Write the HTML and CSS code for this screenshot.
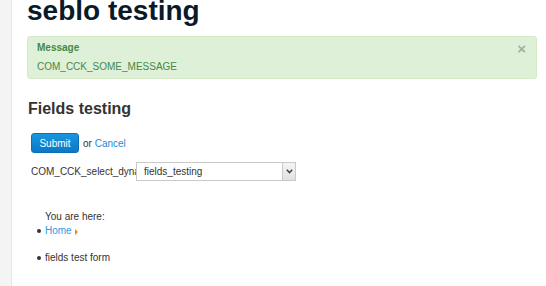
FILE: index.html
```html
<!DOCTYPE html>
<html lang="en">
<head>
    <meta charset="UTF-8">
    <meta name="viewport" content="width=device-width, initial-scale=1.0">
    <title>seblo testing</title>
    <link rel="stylesheet" href="styles.css">
</head>
<body>
    <div class="page">
        <div class="side-strip"></div>
        <div class="content">
            <h1 class="page-title">seblo testing</h1>

            <div class="alert">
                <span class="alert-close">&times;</span>
                <h4 class="alert-heading">Message</h4>
                <p class="alert-text">COM_CCK_SOME_MESSAGE</p>
            </div>

            <h2 class="form-title">Fields testing</h2>

            <form class="cck-form" onsubmit="return false;">
                <div class="form-actions">
                    <button type="submit" class="btn-primary">Submit</button>
                    <span class="or-text">or <a href="#" class="link">Cancel</a></span>
                </div>
                <div class="field-row">
                    <label class="field-label" for="dyn">COM_CCK_select_dynamic</label>
                    <div class="select-box" id="dyn">
                        <span class="select-value">fields_testing</span>
                        <span class="select-arrow">
                            <svg width="7" height="5" viewBox="0 0 7 5"><path d="M0.8 0.8 L3.5 3.6 L6.2 0.8" fill="none" stroke="#444" stroke-width="1.5"/></svg>
                        </span>
                    </div>
                </div>
            </form>

            <div class="breadcrumbs">
                <span class="here">You are here:</span>
                <ul class="crumbs">
                    <li><a href="#" class="link crumb-link">Home</a><span class="divider"></span></li>
                    <li>fields test form</li>
                </ul>
            </div>
        </div>
    </div>
</body>
</html>
```

FILE: styles.css
```css
body {
    margin: 0;
    font-family: "Liberation Sans", Arial, sans-serif;
    font-size: 10px;
    color: #333;
    background: #fff;
    overflow: hidden;
}
.page {
    display: flex;
    min-height: 286px;
}
.side-strip {
    width: 11px;
    background: #f4f4f4;
    border-right: 1px solid #e6e6e6;
    flex-shrink: 0;
}
.content {
    flex: 1;
    padding: 0 9px 0 15px;
}
.page-title {
    margin: -3px 0 11px;
    font-size: 28px;
    line-height: 28px;
    font-weight: bold;
    color: #0b1a2a;
}
.alert {
    position: relative;
    background: #dff0d8;
    border: 1px solid #d6e9c6;
    border-radius: 3px;
    padding: 4px 14px 4px 9px;
    color: #468847;
}
.alert-heading {
    margin: 0;
    font-size: 10px;
    line-height: 14px;
    font-weight: bold;
}
.alert-text {
    margin: 5px 0 0;
    line-height: 14px;
}
.alert-close {
    position: absolute;
    top: 4px;
    right: 10px;
    font-size: 15px;
    font-weight: bold;
    color: #a4ada2;
    line-height: 15px;
}
.form-title {
    margin: 20px 0 14px 1px;
    font-size: 16px;
    line-height: 20px;
    font-weight: bold;
    color: #333;
}
.cck-form {
    margin: 0 0 0 4px;
}
.form-actions {
    display: flex;
    align-items: center;
    gap: 4px;
}
.btn-primary {
    width: 48px;
    height: 20px;
    padding: 0;
    border: 1px solid #0c6fb3;
    border-radius: 3px;
    background: linear-gradient(#1b95de, #0a78c8);
    color: #fff;
    font-family: inherit;
    font-size: 10px;
}
.link {
    color: #1a8ad4;
    text-decoration: none;
}
.crumb-link {
    color: #2b9ae6;
}
.field-row {
    display: flex;
    align-items: center;
    margin-top: 9px;
}
.field-label {
    width: 105px;
    overflow: hidden;
    white-space: nowrap;
}
.select-box {
    width: 160px;
    height: 19px;
    box-sizing: border-box;
    border: 1px solid #c9c9c9;
    display: flex;
    align-items: center;
    justify-content: space-between;
}
.select-value {
    padding-left: 7px;
}
.select-arrow {
    width: 12px;
    height: 17px;
    border-left: 1px solid #c9c9c9;
    background: linear-gradient(#f4f4f4, #e2e2e2);
    display: flex;
    align-items: center;
    justify-content: center;
}
.breadcrumbs {
    margin: 29px 0 0 18px;
    line-height: 14px;
}
.crumbs {
    margin: 0;
    padding-left: 0;
    list-style: none;
}
.crumbs li {
    position: relative;
}
.crumbs li::before {
    content: "";
    position: absolute;
    left: -8px;
    top: 5px;
    width: 4px;
    height: 4px;
    border-radius: 50%;
    background: #333;
}
.crumbs li + li {
    margin-top: 13px;
}
.divider {
    display: inline-block;
    margin-left: 3px;
    width: 0;
    height: 0;
    border-top: 3px solid transparent;
    border-bottom: 3px solid transparent;
    border-left: 3px solid #f08a00;
    vertical-align: -1px;
}
```
